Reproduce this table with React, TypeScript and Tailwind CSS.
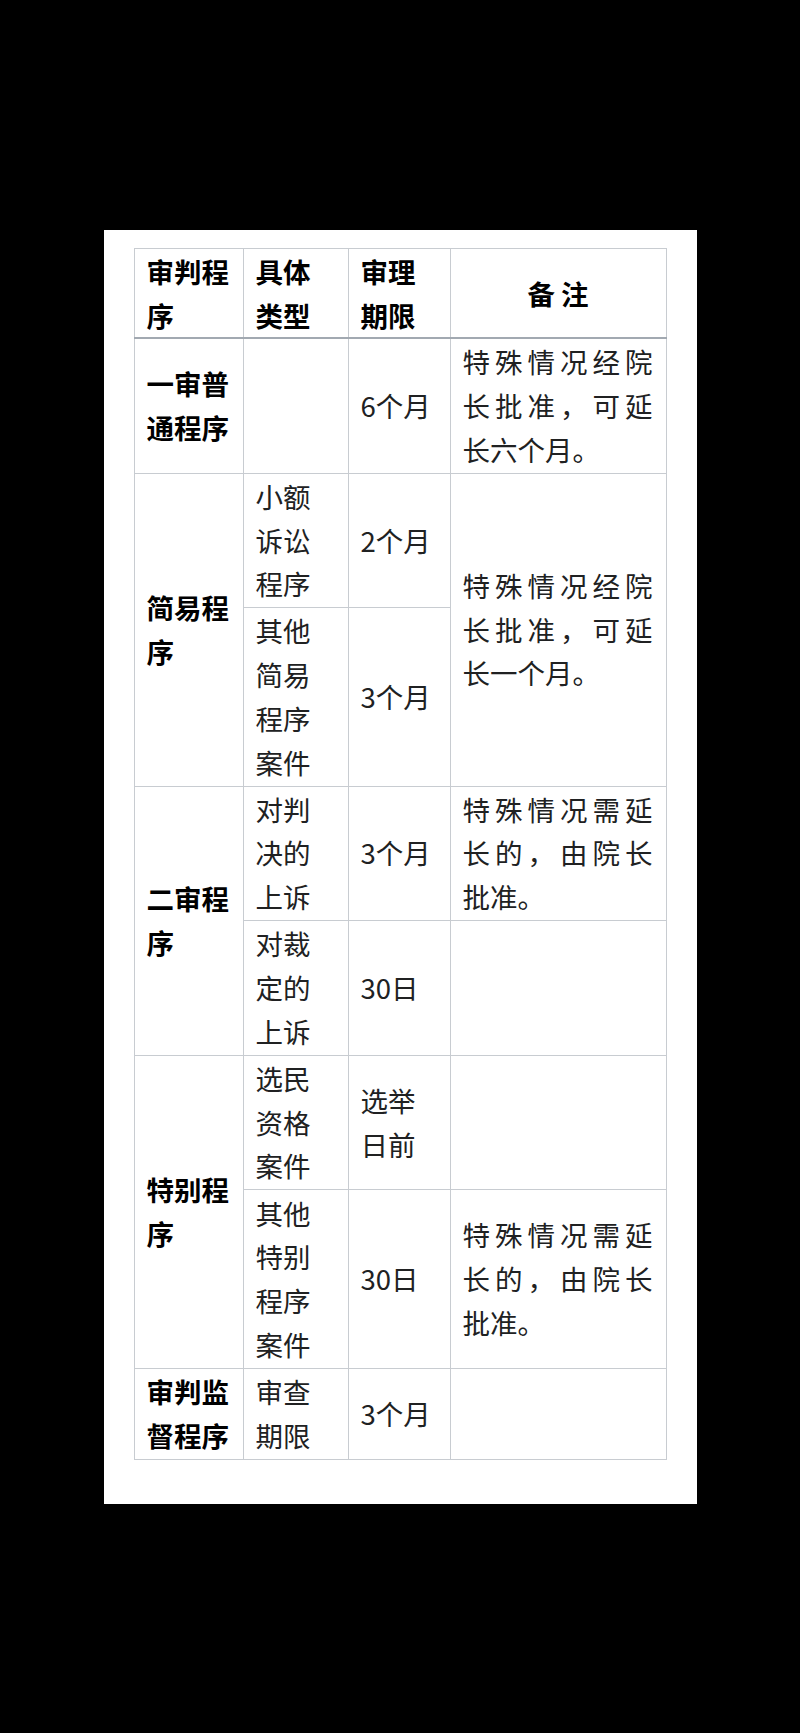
import React from "react";

const border = "border border-[#c8ccd1]";
const td = `${border} px-3 py-[1.25px] align-middle text-left font-normal`;
const th = `${border} border-b-2 border-b-[#a2a9b1] px-3 py-0 leading-[44px] align-middle text-left font-bold text-black`;
const note = `${border} pl-3 pr-[13px] py-[1.25px] align-middle text-justify font-normal`;
const lead = `${border} px-3 py-[1.25px] align-middle text-left font-bold text-black`;

const EXTEND = "特殊情况需延长的，由院长批准。";

export default function App() {
  return (
    <div className="min-h-[1733px] bg-black pt-[230px]">
      <div className="mx-auto w-[593px] bg-white px-[30px] pt-[18px] pb-[44px]">
        <table
          className="w-[532px] table-fixed border-collapse text-[27.5px] leading-[43.7px] text-[#202122]"
          style={{ fontFamily: '"Noto Sans CJK SC", "Noto Sans", sans-serif' }}
        >
          <colgroup>
            <col className="w-[109px]" />
            <col className="w-[105px]" />
            <col className="w-[102px]" />
            <col className="w-[216px]" />
          </colgroup>
          <thead>
            <tr>
              <th className={th}>审判程序</th>
              <th className={th}>具体类型</th>
              <th className={th}>审理期限</th>
              <th className={`${th} !text-center`}>备 注</th>
            </tr>
          </thead>
          <tbody>
            <tr>
              <td className={lead}>一审普通程序</td>
              <td className={td}></td>
              <td className={td}>6个月</td>
              <td className={note}>特殊情况经院长批准，可延长六个月。</td>
            </tr>

            <tr>
              <td rowSpan={2} className={lead}>简易程序</td>
              <td className={td}>小额诉讼程序</td>
              <td className={td}>2个月</td>
              <td rowSpan={2} className={note}>特殊情况经院长批准，可延长一个月。</td>
            </tr>
            <tr>
              <td className={td}>其他简易程序案件</td>
              <td className={td}>3个月</td>
            </tr>

            <tr>
              <td rowSpan={2} className={lead}>二审程序</td>
              <td className={td}>对判决的上诉</td>
              <td className={td}>3个月</td>
              <td className={note}>{EXTEND}</td>
            </tr>
            <tr>
              <td className={td}>对裁定的上诉</td>
              <td className={td}>30日</td>
              <td className={note}></td>
            </tr>

            <tr>
              <td rowSpan={2} className={lead}>特别程序</td>
              <td className={td}>选民资格案件</td>
              <td className={td}>选举日前</td>
              <td className={note}></td>
            </tr>
            <tr>
              <td className={td}>其他特别程序案件</td>
              <td className={td}>30日</td>
              <td className={note}>{EXTEND}</td>
            </tr>

            <tr>
              <td className={lead}>审判监督程序</td>
              <td className={td}>审查期限</td>
              <td className={td}>3个月</td>
              <td className={note}></td>
            </tr>
          </tbody>
        </table>
      </div>
    </div>
  );
}
